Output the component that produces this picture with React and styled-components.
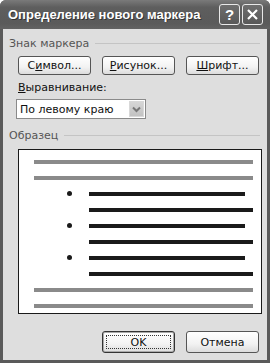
import React from "react";
import styled, { createGlobalStyle } from "styled-components";

const GlobalStyle = createGlobalStyle`
  html, body {
    margin: 0;
    padding: 0;
    background: #ffffff;
  }
  body {
    font-family: "DejaVu Sans", "Liberation Sans", sans-serif;
  }
`;

const Window = styled.div`
  width: 270px;
  height: 363px;
  box-sizing: border-box;
  background: #5a5a5a;
  border-radius: 6px 6px 0 0;
  padding: 0 3px 3px 3px;
  display: flex;
  flex-direction: column;
`;

const TitleBar = styled.div`
  height: 29px;
  display: flex;
  align-items: center;
  padding: 0 7px 0 8px;
  background: linear-gradient(#7a7a7a, #5e5e5e 25%, #5a5a5a 80%, #626262);
  border-radius: 6px 6px 0 0;
  margin: 0 -3px;
`;

const Title = styled.div`
  flex: 1;
  white-space: nowrap;
  overflow: hidden;
  color: #ffffff;
  font-family: "Liberation Sans", sans-serif;
  font-size: 13px;
  font-weight: bold;
  letter-spacing: 0;
  text-shadow: 1px 1px 0 #333;
`;

const CaptionButton = styled.div`
  width: 19px;
  height: 19px;
  margin-left: 2px;
  border: 1px solid #e8e8e8;
  border-radius: 3px;
  background: linear-gradient(#6e6e6e, #585858);
  display: flex;
  align-items: center;
  justify-content: center;
  color: #ffffff;
  font-size: 15px;
  font-weight: bold;
  font-family: "Liberation Sans", sans-serif;
`;

const Body = styled.div`
  flex: 1;
  background: #dedede;
  display: flex;
  flex-direction: column;
  padding: 8px 0 0 0;
  font-size: 11px;
  color: #111;
`;

const GroupHeader = styled.div`
  display: flex;
  align-items: center;
  height: 13px;
  padding-left: 6px;
  margin-right: 7px;
  margin-top: ${(p) => p.$top || 0}px;
  color: #555;
  gap: 6px;

  &::after {
    content: "";
    flex: 1;
    height: 1px;
    background: #c4c4c4;
  }
`;

const ButtonRow = styled.div`
  display: flex;
  gap: 11px;
  padding-left: ${(p) => p.$left}px;
  margin-top: ${(p) => p.$top}px;
`;

const Button = styled.div`
  width: 73px;
  height: ${(p) => p.$h}px;
  box-sizing: border-box;
  border: 1px solid ${(p) => (p.$default ? "#333" : "#555")};
  border-radius: 3px;
  background: linear-gradient(#ffffff, #f2f2f2 60%, #dcdcdc);
  display: flex;
  align-items: center;
  justify-content: center;
  position: relative;
  font-size: 11px;
  color: #111;

  ${(p) =>
    p.$default &&
    `
    box-shadow: inset 0 0 0 1px #aaa;
    &::after {
      content: "";
      position: absolute;
      inset: 3px;
      border: 1px dotted #333;
    }
  `}
`;

const Key = styled.span`
  text-decoration: underline;
`;

const Label = styled.div`
  padding-left: 15px;
  margin-top: 6px;
  height: 13px;
  line-height: 13px;
`;

const Select = styled.div`
  margin: 5px 0 0 13px;
  width: 130px;
  height: 20px;
  box-sizing: border-box;
  border: 1px solid #8a8a8a;
  background: #ffffff;
  display: flex;
  align-items: center;
  padding: 0 1px 0 3px;
`;

const SelectText = styled.div`
  flex: 1;
  font-size: 11px;
`;

const SelectArrow = styled.div`
  width: 15px;
  height: 16px;
  background: linear-gradient(#d6d6d6, #c2c2c2);
  border: 1px solid #d8d8d8;
  box-sizing: border-box;
  display: flex;
  align-items: center;
  justify-content: center;
`;

const Preview = styled.div`
  margin: 7px 5px 0 15px;
  height: 165px;
  box-sizing: border-box;
  border: 1px solid #1a1a1a;
  background: #ffffff;
  padding: 10px 8px 0 15px;
  display: flex;
  flex-direction: column;
  gap: 12px;
`;

const GrayLine = styled.div`
  height: 4px;
  background: #8a8a8a;
`;

const TextLine = styled.div`
  position: relative;
  margin-left: 55px;
  margin-right: ${(p) => p.$short}px;
  height: 4px;
  background: #1a1a1a;
`;

const Bullet = styled.span`
  position: absolute;
  left: -22px;
  top: -1px;
  width: 5px;
  height: 5px;
  border-radius: 50%;
  background: #1a1a1a;
`;

export default function App() {
  const bulletRows = [0, 1, 2];
  return (
    <>
      <GlobalStyle />
      <Window>
        <TitleBar>
          <Title>Определение нового маркера</Title>
          <CaptionButton>?</CaptionButton>
          <CaptionButton>
            <svg width="13" height="13" viewBox="0 0 13 13">
              <path d="M2 2 L11 11 M11 2 L2 11" stroke="#fff" strokeWidth="2.2" />
            </svg>
          </CaptionButton>
        </TitleBar>
        <Body>
          <GroupHeader>Знак маркера</GroupHeader>
          <ButtonRow $top={6} $left={15}>
            <Button $h={19}>
              <span>
                С<Key>и</Key>мвол...
              </span>
            </Button>
            <Button $h={19}>
              <span>
                <Key>Р</Key>исунок...
              </span>
            </Button>
            <Button $h={19}>
              <span>
                <Key>Ш</Key>рифт...
              </span>
            </Button>
          </ButtonRow>
          <Label>
            <Key>В</Key>ыравнивание:
          </Label>
          <Select>
            <SelectText>По левому краю</SelectText>
            <SelectArrow>
              <svg width="9" height="7" viewBox="0 0 9 7">
                <path d="M1 1.5 L4.5 5 L8 1.5" fill="none" stroke="#777" strokeWidth="2" />
              </svg>
            </SelectArrow>
          </Select>
          <GroupHeader $top={10}>Образец</GroupHeader>
          <Preview>
            <GrayLine />
            <GrayLine />
            {bulletRows.map((i) => (
              <React.Fragment key={i}>
                <TextLine $short={8}>
                  <Bullet />
                </TextLine>
                <TextLine $short={0} />
              </React.Fragment>
            ))}
            <GrayLine />
            <GrayLine />
          </Preview>
          <ButtonRow $top={17} $left={99}>
            <Button $h={22} $default>
              OK
            </Button>
            <Button $h={22}>Отмена</Button>
          </ButtonRow>
        </Body>
      </Window>
    </>
  );
}
